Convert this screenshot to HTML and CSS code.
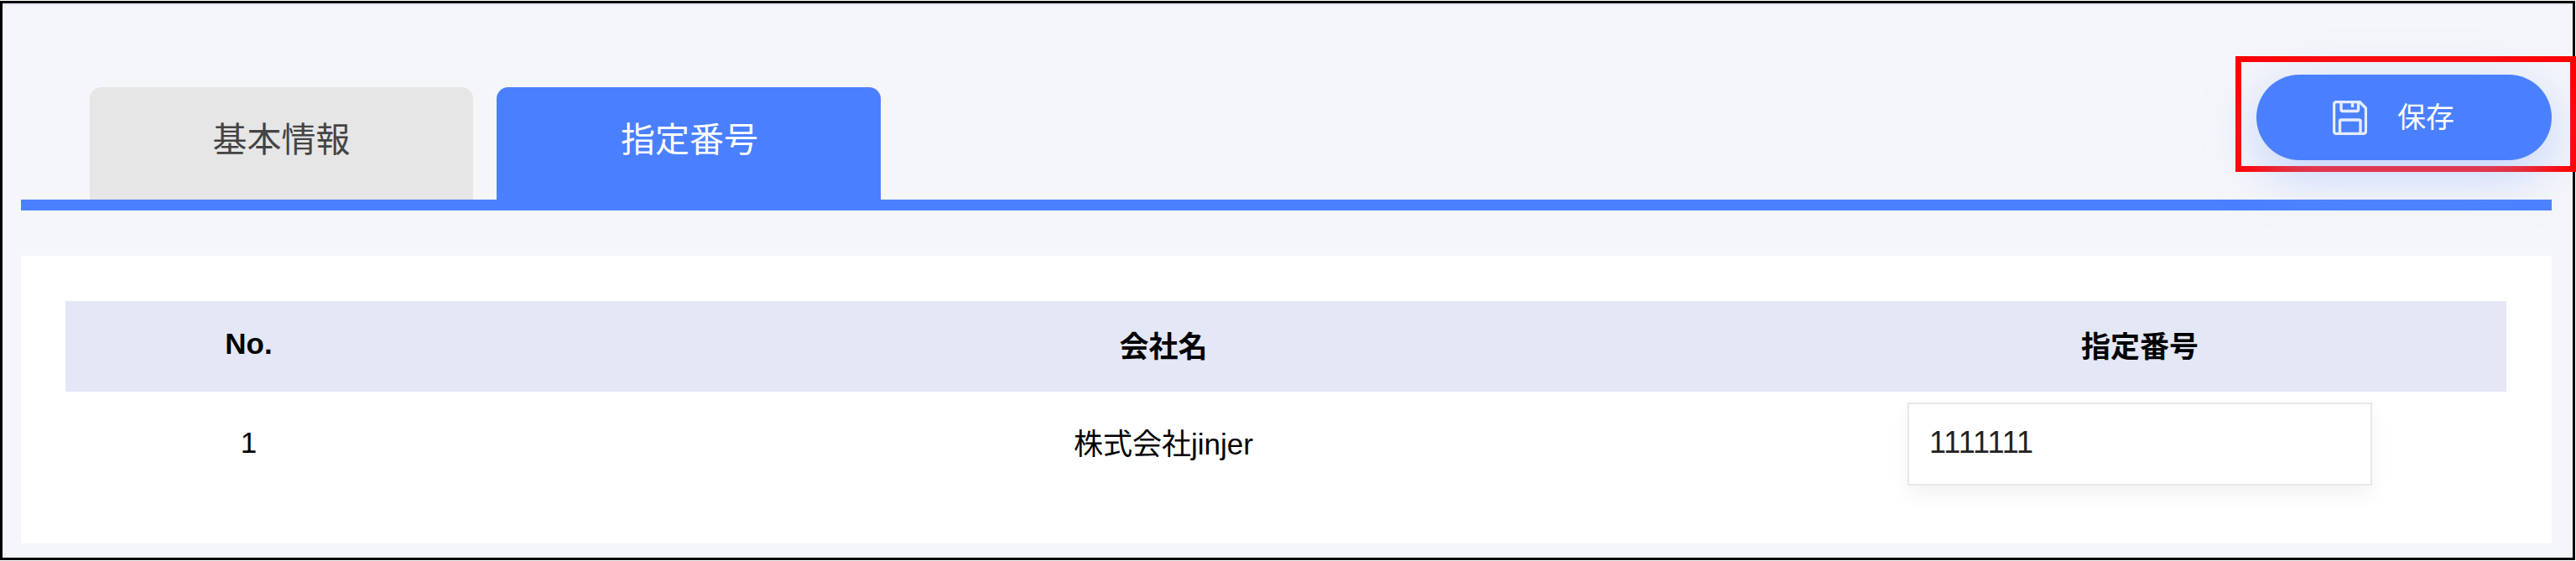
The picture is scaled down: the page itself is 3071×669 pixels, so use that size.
FILE: index.html
```html
<!DOCTYPE html>
<html lang="ja">

<head>
    <meta charset="UTF-8">
    <title>指定番号</title>
    <link rel="stylesheet" href="styles.css">
</head>

<body>
    <div class="frame">
        <!-- タブと保存ボタン -->
        <div class="tabbar">
            <div class="tabs">
                <a class="tab">基本情報</a>
                <a class="tab tab--active">指定番号</a>
            </div>
            <button class="save-btn">
                <svg class="save-btn__icon" viewBox="0 0 41 41" fill="none" stroke="#e6ecff" stroke-width="3.4">
                    <path d="M4 1.500H32L39.500 9V36.500a3 3 0 0 1-3 3H4.500a3 3 0 0 1-3-3V4.500a3 3 0 0 1 3-3z" stroke-linejoin="round" />
                    <path d="M10 2V11a1.500 1.500 0 0 0 1.500 1.500H29A1.500 1.500 0 0 0 30.500 11V2" />
                    <path d="M23.500 3V8" />
                    <path d="M8.500 39V24.500A1.500 1.500 0 0 1 10 23H31.500A1.500 1.500 0 0 1 33 24.500V39" />
                </svg>
                <span class="save-btn__label">保存</span>
            </button>
        </div>
        <div class="tabline"></div>

        <!-- 一覧 -->
        <div class="panel">
            <div class="row row--head">
                <div>No.</div>
                <div>会社名</div>
                <div>指定番号</div>
            </div>
            <div class="row row--body">
                <div class="row__no">1</div>
                <div class="row__name">株式会社jinjer</div>
                <div><input class="number-input" type="text" value="1111111"></div>
            </div>
        </div>
    </div>

    <!-- 赤枠の注記 -->
    <div class="highlight"></div>
</body>

</html>
```

FILE: styles.css
```css
* {
    box-sizing: border-box;
}

body {
    margin: 0;
    background: #fff;
    font-family: "Liberation Sans", "Noto Sans CJK JP", sans-serif;
    color: #000;
    position: relative;
    height: 669px;
    overflow: hidden;
}

.frame {
    margin: 1px 1px 0 0;
    height: 667px;
    border: 3px solid #000;
    background: #f5f6fa;
    padding: 85px 25px 0 22px;
    box-shadow: inset 0 2px 0 #e6e8f4;
}

/* タブ */
.tabbar {
    display: flex;
    justify-content: space-between;
    align-items: flex-start;
    height: 149px;
}

.tabs {
    display: flex;
    gap: 28px;
    margin: 15px 0 0 82px;
}

.tab {
    width: 457px;
    height: 134px;
    padding-top: 35px;
    background: #e6e6e6;
    border-radius: 14px 14px 0 0;
    color: #444;
    font-size: 41px;
    line-height: 56px;
    text-align: center;
}

.tab--active {
    width: 458px;
    padding-left: 2px;
    background: #4a80ff;
    color: #fff;
}

.tabline {
    height: 13px;
    background: #4a80ff;
}

/* 保存ボタン */
.save-btn {
    position: relative;
    z-index: 1;
    display: flex;
    align-items: center;
    width: 352px;
    height: 102px;
    padding: 0 0 0 91px;
    border: 0;
    border-radius: 51px;
    background: #4a80ff;
    color: #fff;
    font-family: inherit;
    font-size: 34px;
    box-shadow: 0 16px 60px rgba(150, 180, 255, 0.55);
}

.save-btn__icon {
    width: 41px;
    height: 41px;
    margin-right: 36px;
}

.save-btn__label {
    margin-bottom: 6px;
}

/* 一覧 */
.panel {
    height: 343px;
    margin-top: 54px;
    padding: 54px 54px 0 53px;
    background: #fff;
}

.row {
    display: grid;
    grid-template-columns: 437px 1744px 584px;
    padding-right: 145px;
    text-align: center;
}

.row--head {
    height: 108px;
    padding-bottom: 6px;
    align-items: center;
    background: #e4e7f6;
    font-size: 35px;
    font-weight: bold;
}

.row--body {
    padding-top: 13px;
    align-items: center;
    font-size: 35px;
}

.row__no {
    margin-bottom: 4px;
}

.row__name {
    margin-bottom: 6px;
}

.number-input {
    display: block;
    width: 554px;
    height: 99px;
    margin: 0 auto;
    padding: 0 0 4px 24px;
    border: 2px solid #e8e8e8;
    background: #fff;
    font-family: inherit;
    font-size: 36px;
    color: #222;
    box-shadow: 0 12px 22px rgba(0, 0, 0, 0.05);
}

/* 赤枠 */
.highlight {
    position: absolute;
    top: 67px;
    right: 0;
    width: 406px;
    height: 138px;
    border: 7px solid #f00;
}
```
